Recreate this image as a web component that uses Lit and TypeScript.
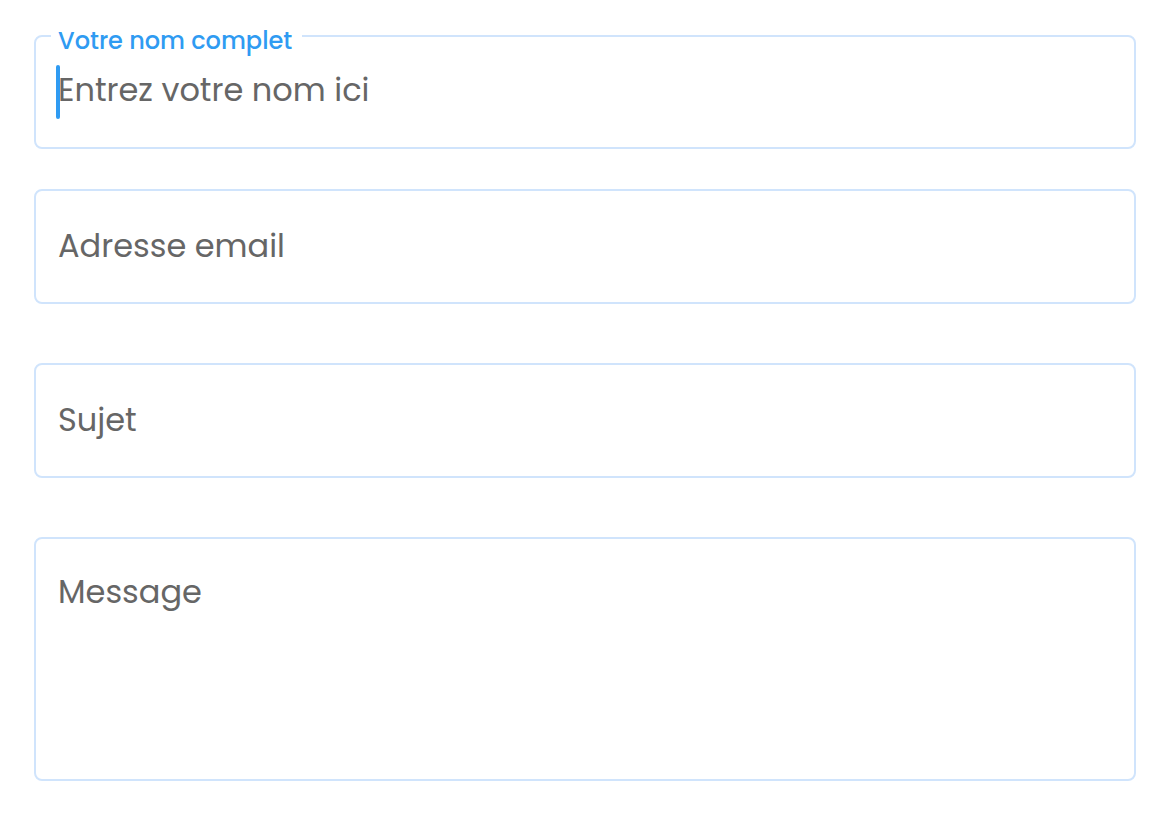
import { LitElement, html, css, nothing } from "lit";
import { customElement, state } from "lit/decorators.js";
import { classMap } from "lit/directives/class-map.js";

type Field = {
  id: string;
  label: string;
  type: "text" | "email" | "textarea";
  hint?: string;
};

const FIELDS: Field[] = [
  { id: "name", label: "Votre nom complet", type: "text", hint: "Entrez votre nom ici" },
  { id: "email", label: "Adresse email", type: "email" },
  { id: "subject", label: "Sujet", type: "text" },
  { id: "message", label: "Message", type: "textarea" },
];

@customElement("app-root")
export class AppRoot extends LitElement {
  static styles = css`
    :host {
      display: block;
      color: #666;
      background: #fff;
      font-family: Poppins, Inter, sans-serif;
      font-size: 32px;
      line-height: 48px;
    }
    .form {
      display: flex;
      flex-direction: column;
      gap: 59px;
      padding: 35px 34px 51px;
    }
    .field {
      display: grid;
      position: relative;
      box-sizing: border-box;
      border: 2px solid #d0e4fc;
      border-radius: 8px;
    }
    .field.active {
      margin-bottom: -19px;
    }
    .label,
    .control {
      grid-area: 1 / 1;
    }
    .label {
      align-self: start;
      justify-self: start;
      padding: 31px 22px 0;
      pointer-events: none;
    }
    .control {
      box-sizing: border-box;
      width: 100%;
      margin: 0;
      padding: 31px 22px 32px;
      border: 0;
      border-radius: 6px;
      outline: 0;
      background: none;
      color: inherit;
      font: inherit;
      resize: none;
    }
    .control::placeholder {
      color: #666;
      opacity: 1;
    }
    .multiline .control {
      height: 240px;
      padding-top: 29px;
    }
    .multiline .label {
      padding-top: 29px;
    }
    .active .label {
      position: absolute;
      top: -14px;
      left: 15px;
      padding: 0 10px 0 7px;
      background: #fff;
      color: #2f9bf2;
      font-size: 24px;
      font-weight: 500;
      line-height: 36px;
      white-space: nowrap;
    }
    .active .control {
      padding: 29px 22px 33px;
    }
    .active .control:placeholder-shown {
      caret-color: transparent;
    }
    .caret {
      position: absolute;
      top: 28px;
      left: 20px;
      width: 4px;
      height: 54px;
      border-radius: 2px;
      background: #2f9bf2;
      pointer-events: none;
    }
  `;

  @state() private active = "name";
  @state() private values: Record<string, string> = {};

  private onInput(id: string, event: Event) {
    const target = event.target as HTMLInputElement | HTMLTextAreaElement;
    this.values = { ...this.values, [id]: target.value };
  }

  private renderField(field: Field) {
    const multiline = field.type === "textarea";
    const active = this.active === field.id || !!this.values[field.id];
    const placeholder = active && field.hint ? field.hint : " ";
    const focus = () => (this.active = field.id);
    const input = (event: Event) => this.onInput(field.id, event);
    return html`
      <div class=${classMap({ field: true, active, multiline })}>
        ${multiline
          ? html`<textarea class="control" id=${field.id} name=${field.id}
              placeholder=${placeholder} @focus=${focus} @input=${input}></textarea>`
          : html`<input class="control" id=${field.id} name=${field.id} type=${field.type}
              placeholder=${placeholder} @focus=${focus} @input=${input} />`}
        <label class="label" for=${field.id}>${field.label}</label>
        ${this.active === field.id && !this.values[field.id]
          ? html`<span class="caret"></span>`
          : nothing}
      </div>
    `;
  }

  render() {
    return html`<form class="form">${FIELDS.map((field) => this.renderField(field))}</form>`;
  }
}
